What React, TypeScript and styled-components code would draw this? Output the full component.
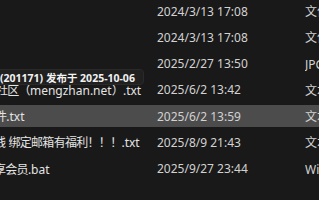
import React from 'react';
import styled, { createGlobalStyle } from 'styled-components';

const GlobalStyle = createGlobalStyle`
  html, body {
    margin: 0;
    padding: 0;
    background: #191919;
    overflow: hidden;
  }
  body {
    font-family: "Noto Sans", "Noto Sans CJK SC", sans-serif;
  }
`;

const List = styled.div`
  position: relative;
  width: 319px;
  height: 200px;
  overflow: hidden;
  display: grid;
  grid-auto-rows: 22px;
  row-gap: 4.3px;
  align-content: start;
`;

const Row = styled.div<{ $selected?: boolean }>`
  display: grid;
  grid-template-columns: 157px 148px 1fr;
  align-items: center;
  background: ${p => (p.$selected ? '#4c4c4c' : 'transparent')};
  font-size: 12px;
  white-space: nowrap;
`;

const NameCell = styled.div<{ $shift: number }>`
  overflow: hidden;
  color: #e4e4e4;

  & > span {
    display: inline-block;
    margin-left: ${p => -p.$shift}px;
  }
`;

const Han = styled.span`
  letter-spacing: -0.7px;
`;

const DateCell = styled.div`
  color: #d2d2d2;
  overflow: hidden;
`;

const TypeCell = styled.div`
  color: #d2d2d2;
  overflow: hidden;
`;

const Tooltip = styled.div`
  position: absolute;
  left: -8px;
  top: 69px;
  height: 14px;
  padding: 0 8px 0 7px;
  display: flex;
  align-items: center;
  background: #202020;
  border: 1px solid #2a2a2a;
  border-radius: 4px;
  color: #f2f2f2;
  font-weight: 700;
  font-size: 10.5px;
  white-space: nowrap;
`;

type Item = { name: string; shift: number; date: string; type: string };

const items: Item[] = [
  { name: '', shift: 0, date: '2024/3/13 17:08', type: '文件夹' },
  { name: '', shift: 0, date: '2024/3/13 17:08', type: '文件夹' },
  { name: '', shift: 0, date: '2025/2/27 13:50', type: 'JPG 文件' },
  { name: '社区（mengzhan.net）.txt', shift: 4, date: '2025/6/2 13:42', type: '文本文档' },
  { name: '件.txt', shift: 5, date: '2025/6/2 13:59', type: '文本文档' },
  { name: '钱 绑定邮箱有福利！！！.txt', shift: 6, date: '2025/8/9 21:43', type: '文本文档' },
  { name: '享会员.bat', shift: 6, date: '2025/9/27 23:44', type: 'Windows 批处理文件' },
];

// wide (CJK / full-width) runs get tighter spacing, like the Explorer font
const splitRuns = (text: string) =>
  text.split(/([\u3000-\u9fff\uff00-\uffef]+)/).filter(Boolean).map((part, i) =>
    /[\u3000-\u9fff\uff00-\uffef]/.test(part) ? <Han key={i}>{part}</Han> : <React.Fragment key={i}>{part}</React.Fragment>
  );

export default function App() {
  return (
    <>
      <GlobalStyle />
      <List>
        {items.map((item, i) => (
          <Row key={i} $selected={i === 4}>
            <NameCell $shift={item.shift}>
              <span>{splitRuns(item.name)}</span>
            </NameCell>
            <DateCell>{item.date}</DateCell>
            <TypeCell>{item.type}</TypeCell>
          </Row>
        ))}
        <Tooltip>(201171) 发布于 2025-10-06</Tooltip>
      </List>
    </>
  );
}
